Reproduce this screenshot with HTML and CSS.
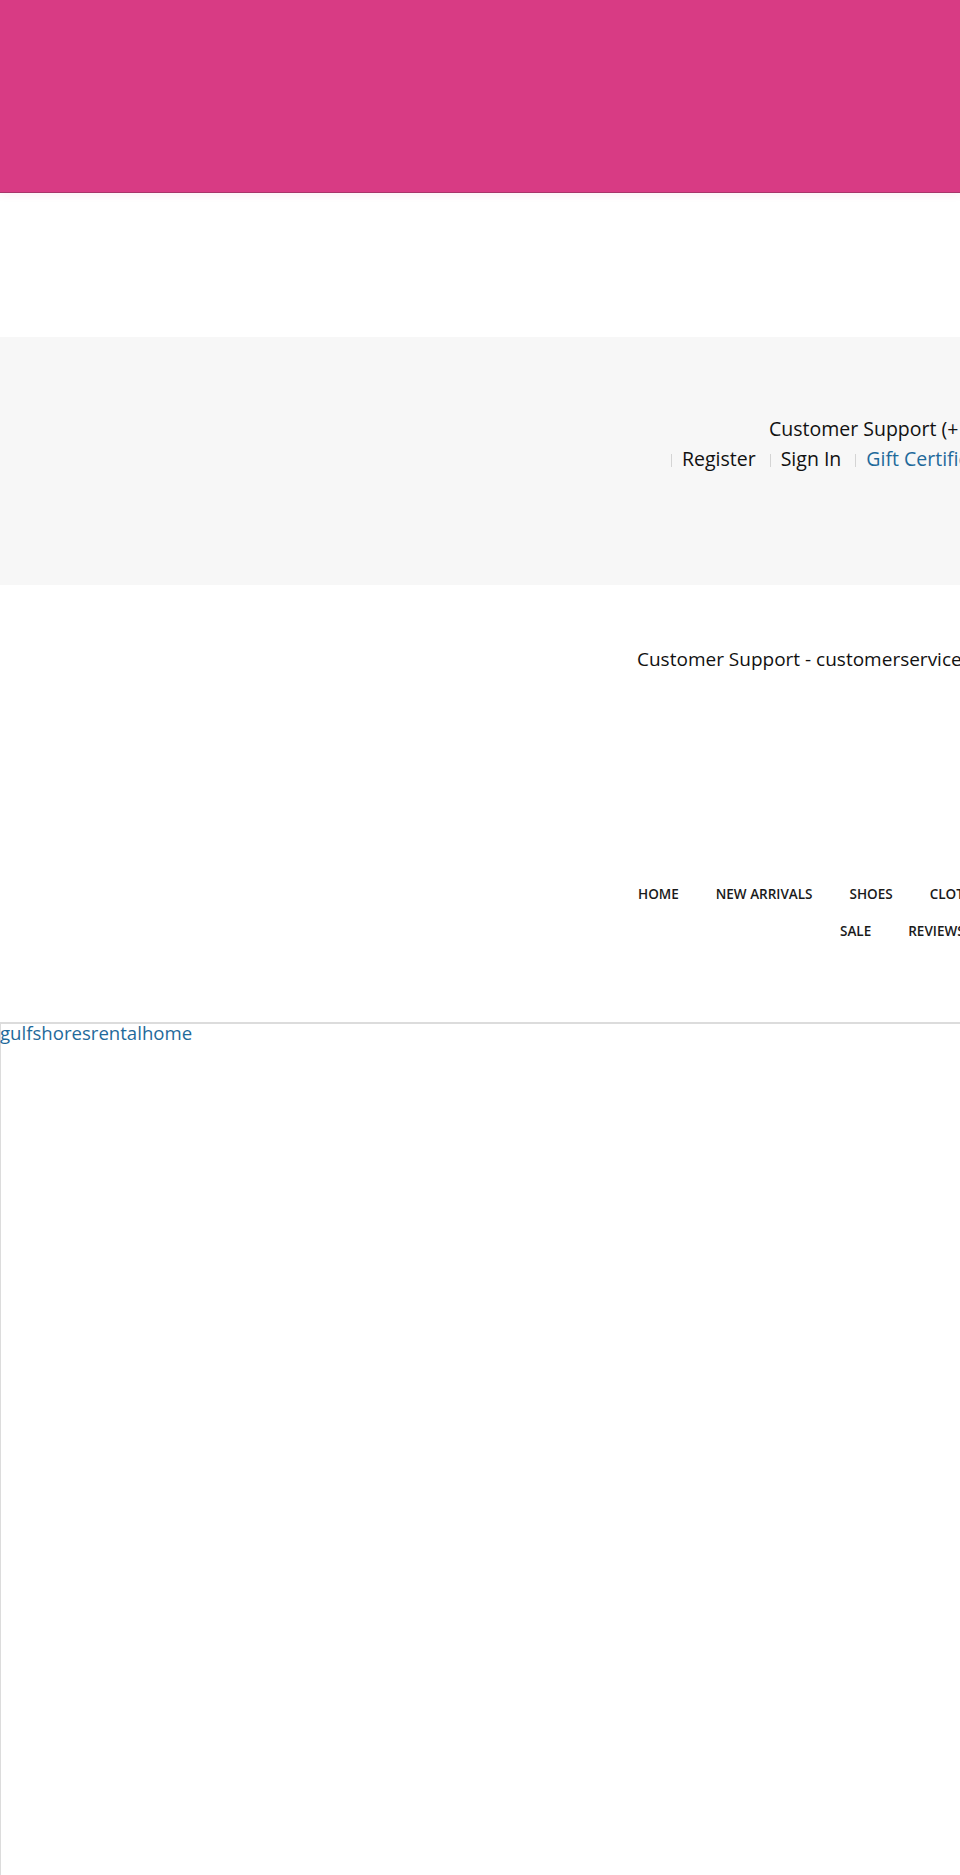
FILE: index.html
```html
<!DOCTYPE html>
<html lang="en">
<head>
    <meta charset="UTF-8">
    <meta name="viewport" content="width=device-width, initial-scale=1.0">
    <title>Shop</title>
    <link rel="stylesheet" href="styles.css">
</head>
<body>
    <div class="promo-bar"></div>
    <div class="logo-area"></div>

    <div class="top-links">
        <div class="support-phone">Customer Support (+1) 800-555-0142</div>
        <ul class="account-links">
            <li>Register</li>
            <li>Sign In</li>
            <li class="gift">Gift Certificates</li>
        </ul>
    </div>

    <header class="main-header">
        <div class="support-mail">Customer Support - customerservice@shop.com</div>
        <nav class="main-nav">
            <ul class="nav-row first">
                <li>HOME</li>
                <li>NEW ARRIVALS</li>
                <li>SHOES</li>
                <li>CLOTHING</li>
                <li>ACCESSORIES</li>
            </ul>
            <ul class="nav-row second">
                <li>SALE</li>
                <li>REVIEWS</li>
                <li>BLOG</li>
            </ul>
        </nav>
    </header>

    <div class="frame">
        <a class="frame-link">gulfshoresrentalhome</a>
    </div>
</body>
</html>
```

FILE: styles.css
```css
* {
    margin: 0;
    padding: 0;
    box-sizing: border-box;
}

html, body {
    overflow: hidden;
}

body {
    width: 960px;
    height: 1875px;
    font-family: 'Open Sans', 'Liberation Sans', sans-serif;
    color: #111;
    background: #fff;
    white-space: nowrap;
}

ul {
    list-style: none;
}

.promo-bar {
    height: 193px;
    background-color: #d83b84;
    border-bottom: 1px solid #a8356a;
    box-shadow: 0 2px 8px rgba(216, 59, 132, 0.08);
}

.logo-area {
    height: 144px;
}

/* grey strip with phone + account links */
.top-links {
    height: 248px;
    background-color: #f7f7f7;
    padding-top: 77px;
    font-size: 19.5px;
    line-height: 30px;
}

.support-phone {
    padding-left: 769px;
}

.account-links {
    display: flex;
    padding-left: 671px;
}

.account-links li {
    margin-right: 14px;
}

.account-links li::before {
    content: '';
    display: inline-block;
    width: 1px;
    height: 13px;
    margin-right: 10px;
    background-color: #d4d4d4;
    vertical-align: -1px;
}

.account-links .gift {
    color: #1f6a9b;
}

.main-header {
    padding-top: 59px;
    height: 437px;
}

.support-mail {
    padding-left: 637px;
    font-size: 19px;
    line-height: 30px;
}

.main-nav {
    margin-top: 202px;
    font-size: 13.5px;
    font-weight: 600;
    line-height: 37px;
    color: #1a1a1a;
}

.nav-row {
    display: flex;
    gap: 37px;
}

.nav-row.first {
    padding-left: 638px;
}

.nav-row.second {
    padding-left: 840px;
}

.frame {
    height: 853px;
    border-top: 2px solid #dcdcdc;
    border-left: 1px solid #dcdcdc;
}

.frame-link {
    display: block;
    margin-left: -1px;
    font-size: 18.6px;
    line-height: 18px;
    color: #1f6a9b;
}
```
